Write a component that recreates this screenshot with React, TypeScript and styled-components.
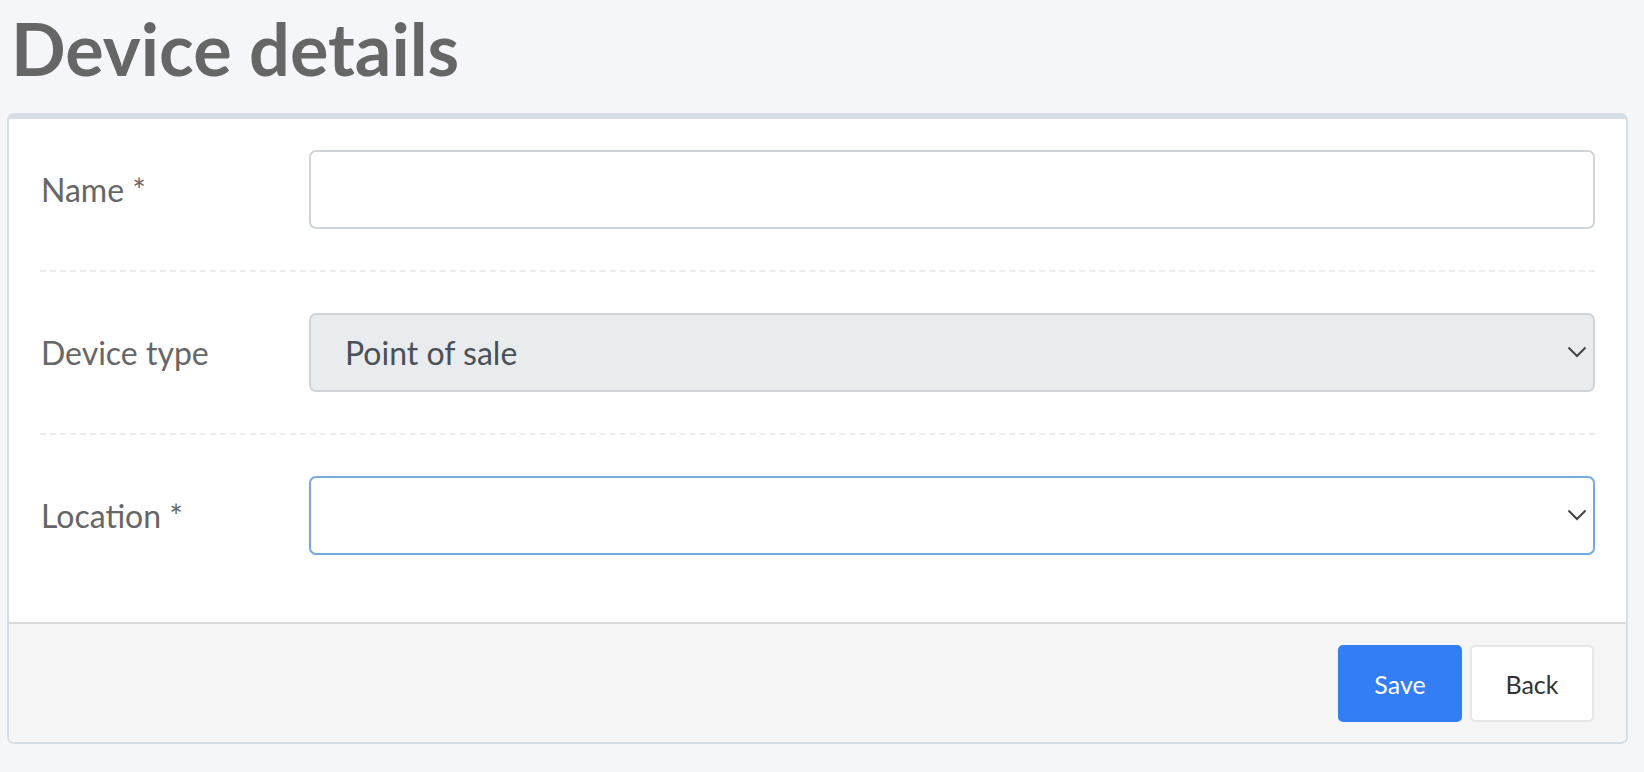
import React from "react";
import styled, { createGlobalStyle } from "styled-components";

const GlobalStyle = createGlobalStyle`
  html, body {
    margin: 0;
    padding: 0;
    background: #f5f6fa;
    font-family: Lato, "Open Sans", sans-serif;
  }
`;

const Page = styled.div`
  padding: 0 16px 0 7px;
`;

const Title = styled.h1`
  margin: 0;
  padding: 8px 0 0 4px;
  height: 105px;
  box-sizing: border-box;
  font-size: 72px;
  line-height: 80px;
  font-weight: 700;
  color: #666666;
`;

const Card = styled.div`
  margin-top: 8px;
  background: #ffffff;
  border: 2px solid #d5dde5;
  border-top-width: 6px;
  border-radius: 7px;
  overflow: hidden;
`;

const CardBody = styled.div`
  padding: 31px 31px 27px;
`;

const Row = styled.div<{ $last?: boolean }>`
  display: grid;
  grid-template-columns: 269px 1fr;
  align-items: center;
  padding: ${(p) => (p.$last ? "41px 0 40px" : "0 0 41px")};
  border-bottom: ${(p) => (p.$last ? "none" : "2px dashed #ececec")};
  & + & {
    padding-top: 41px;
  }
`;

const Label = styled.label`
  font-size: 32px;
  color: #666666;
  padding-left: 1px;
`;

const Field = styled.div<{ $readonly?: boolean; $focus?: boolean }>`
  position: relative;
  height: 79px;
  box-sizing: border-box;
  border: 2px solid ${(p) => (p.$focus ? "#74a9e3" : "#ced4da")};
  border-radius: 7px;
  background: ${(p) => (p.$readonly ? "#e9ecef" : "#ffffff")};
  display: flex;
  align-items: center;
  padding: 0 60px 0 34px;
  font-size: 32px;
  color: #495057;
`;

const Chevron = styled.svg`
  position: absolute;
  right: 6px;
  top: 50%;
  margin-top: -7px;
  width: 20px;
  height: 12px;
`;

const Footer = styled.div`
  background: #f5f5f5;
  border-top: 2px solid #d9d9d9;
  display: flex;
  justify-content: flex-end;
  gap: 8px;
  padding: 21px 32px 20px;
`;

const Button = styled.button<{ $primary?: boolean }>`
  width: 124px;
  height: 77px;
  border-radius: 5px;
  font-family: Lato, "Open Sans", sans-serif;
  font-size: 25px;
  cursor: pointer;
  border: 2px solid ${(p) => (p.$primary ? "#337ef4" : "#e6e6e6")};
  background: ${(p) => (p.$primary ? "#337ef4" : "#ffffff")};
  color: ${(p) => (p.$primary ? "#ffffff" : "#333333")};
`;

const ChevronIcon = () => (
  <Chevron viewBox="0 0 20 12">
    <polyline
      points="1.5,1.5 10,10 18.5,1.5"
      fill="none"
      stroke="#444"
      strokeWidth="2"
    />
  </Chevron>
);

const App = () => {
  return (
    <Page>
      <GlobalStyle />
      <Title>Device details</Title>
      <Card>
        <CardBody>
          <Row>
            <Label>Name *</Label>
            <Field />
          </Row>
          <Row>
            <Label>Device type</Label>
            <Field $readonly>
              Point of sale
              <ChevronIcon />
            </Field>
          </Row>
          <Row $last>
            <Label>Location *</Label>
            <Field $focus>
              <ChevronIcon />
            </Field>
          </Row>
        </CardBody>
        <Footer>
          <Button $primary>Save</Button>
          <Button>Back</Button>
        </Footer>
      </Card>
    </Page>
  );
};

export default App;
